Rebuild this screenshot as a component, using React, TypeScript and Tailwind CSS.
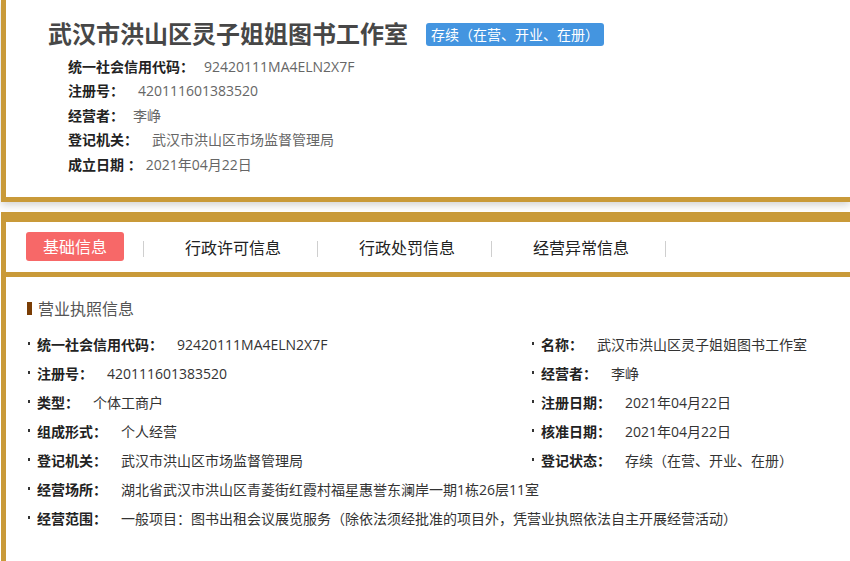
import React from "react";

const font = "font-['Open_Sans','Noto_Sans_CJK_SC',sans-serif]";

function TopRow({ label, value, gap }: { label: string; value: string; gap: string }) {
  return (
    <div className="flex items-center h-[24.5px] text-[14px]">
      <span className="font-bold text-[#222]">{label}</span>
      <span className={`${gap} text-[#666]`}>{value}</span>
    </div>
  );
}

function Item({ label, value, span }: { label: string; value: string; span?: boolean }) {
  return (
    <div className={`flex items-center h-[29px] text-[14px] whitespace-nowrap ${span ? "col-span-2" : ""}`}>
      <span className="w-[2px] h-[3px] bg-[#333] mr-[7px] relative -top-[1px]" />
      <span className="font-bold text-[#222]">{label}</span>
      <span className="ml-[14px] text-[#333]">{value}</span>
    </div>
  );
}

export default function App() {
  const tabs = ["行政许可信息", "行政处罚信息", "经营异常信息"];
  return (
    <div className={`${font} bg-white min-h-[561px] w-[850px] overflow-hidden`}>
      {/* Top card */}
      <div className="ml-px bg-white border-l-[5px] border-b-[5px] border-[#c99a39] shadow-[0_3px_8px_rgba(0,0,0,0.18)] pl-[42px] pt-[18px] pb-[20px] relative z-10">
        <div className="flex items-center h-8">
          <h1 className="text-[24px] font-bold text-[#474747] leading-8">武汉市洪山区灵子姐姐图书工作室</h1>
          <span className="ml-[18px] mt-px bg-[#4495e0] text-white text-[14px] leading-[23px] px-[5px] rounded-[3px]">
            存续（在营、开业、在册）
          </span>
        </div>
        <div className="mt-[4px] pl-[20px]">
          <TopRow label="统一社会信用代码：" value="92420111MA4ELN2X7F" gap="ml-[10px]" />
          <TopRow label="注册号：" value="420111601383520" gap="ml-[14px]" />
          <TopRow label="经营者：" value="李峥" gap="ml-[9px]" />
          <TopRow label="登记机关：" value="武汉市洪山区市场监督管理局" gap="ml-[14px]" />
          <TopRow label="成立日期 ：" value="2021年04月22日" gap="ml-[4px]" />
        </div>
      </div>

      {/* Second card */}
      <div className="mt-[10px] ml-px bg-white border-l-[5px] border-t-[10px] border-[#c99a39]">
        <div className="h-[55px] flex items-center border-b-[5px] border-[#c99a39]">
          <div className="ml-[20px] w-[98px] h-[29px] rounded-[3px] bg-[#f76868] text-white text-[16px] flex items-center justify-center pt-px">
            基础信息
          </div>
          <div className="ml-[19px] w-px h-4 bg-[#cfcfcf] mt-[4px]" />
          {tabs.map((t) => (
            <React.Fragment key={t}>
              <div className="w-[173px] pl-[5px] pt-[3px] flex justify-center text-[16px] text-[#222]">{t}</div>
              <div className="w-px h-4 bg-[#cfcfcf] mt-[4px]" />
            </React.Fragment>
          ))}
        </div>
        <div className="pl-[21px] pt-[20px] pb-[40px]">
          <div className="flex items-center h-6">
            <span className="w-[5px] h-[13px] bg-[#7a3d05] mr-[6px]" />
            <span className="text-[16px] text-[#555]">营业执照信息</span>
          </div>
          <div className="mt-[9.5px] pl-px grid grid-cols-[504px_1fr]">
            <Item label="统一社会信用代码：" value="92420111MA4ELN2X7F" />
            <Item label="名称：" value="武汉市洪山区灵子姐姐图书工作室" />
            <Item label="注册号：" value="420111601383520" />
            <Item label="经营者：" value="李峥" />
            <Item label="类型：" value="个体工商户" />
            <Item label="注册日期：" value="2021年04月22日" />
            <Item label="组成形式：" value="个人经营" />
            <Item label="核准日期：" value="2021年04月22日" />
            <Item label="登记机关：" value="武汉市洪山区市场监督管理局" />
            <Item label="登记状态：" value="存续（在营、开业、在册）" />
            <Item label="经营场所：" value="湖北省武汉市洪山区青菱街红霞村福星惠誉东澜岸一期1栋26层11室" span />
            <Item
              label="经营范围："
              value="一般项目：图书出租会议展览服务（除依法须经批准的项目外，凭营业执照依法自主开展经营活动）"
              span
            />
          </div>
        </div>
      </div>
    </div>
  );
}
